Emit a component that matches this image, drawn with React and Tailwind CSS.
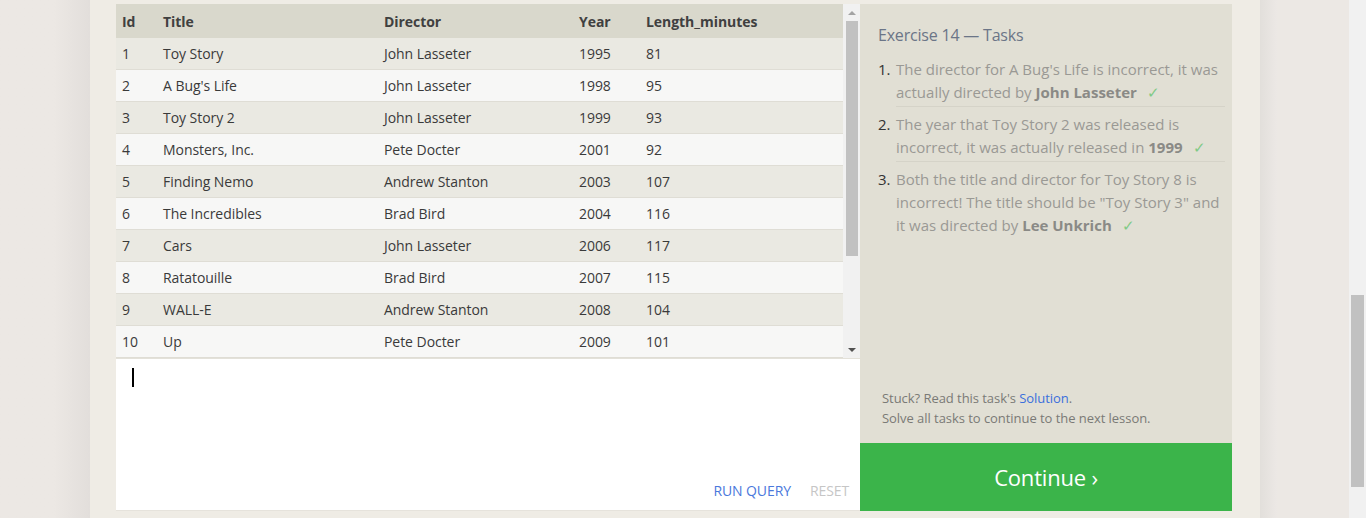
import React from "react";

const rows = [
  [1, "Toy Story", "John Lasseter", 1995, 81],
  [2, "A Bug's Life", "John Lasseter", 1998, 95],
  [3, "Toy Story 2", "John Lasseter", 1999, 93],
  [4, "Monsters, Inc.", "Pete Docter", 2001, 92],
  [5, "Finding Nemo", "Andrew Stanton", 2003, 107],
  [6, "The Incredibles", "Brad Bird", 2004, 116],
  [7, "Cars", "John Lasseter", 2006, 117],
  [8, "Ratatouille", "Brad Bird", 2007, 115],
  [9, "WALL-E", "Andrew Stanton", 2008, 104],
  [10, "Up", "Pete Docter", 2009, 101],
];

const font = { fontFamily: '"Open Sans", "Noto Sans", sans-serif' };

function Check() {
  return <span className="ml-[10px] text-[#7fca86] font-normal">✓</span>;
}

export default function App() {
  return (
    <div
      className="w-[1366px] h-[518px] flex bg-[#ece8e4] overflow-hidden"
      style={font}
    >
      <div className="w-[90px] h-full bg-gradient-to-r from-[#ece8e4] from-60% to-[#e2dedb]" />
      <div className="w-[1170px] h-full bg-[#efece5] pt-[4px] pl-[26px] flex">
        {/* left column */}
        <div className="w-[744px] flex flex-col">
          <div className="h-[354px] flex">
            <div className="w-[727px] text-[14px] tracking-[-0.05px] text-[#3a3a3a]">
              <div className="grid grid-cols-[41px_221px_195px_67px_203px] h-[34px] items-center bg-[#d9d8cc] font-bold text-[#404040]">
                <div className="pl-[6px]">Id</div>
                <div className="pl-[6px]">Title</div>
                <div className="pl-[6px]">Director</div>
                <div className="pl-[6px]">Year</div>
                <div className="pl-[6px]">Length_minutes</div>
              </div>
              {rows.map((r, i) => (
                <div
                  key={r[0]}
                  className={
                    "grid grid-cols-[41px_221px_195px_67px_203px] h-[32px] items-center border-b border-[#dfddd5] " +
                    (i % 2 === 0 ? "bg-[#eae9e2]" : "bg-[#f7f7f6]")
                  }
                >
                  <div className="pl-[6px]">{r[0]}</div>
                  <div className="pl-[6px]">{r[1]}</div>
                  <div className="pl-[6px]">{r[2]}</div>
                  <div className="pl-[6px]">{r[3]}</div>
                  <div className="pl-[6px]">{r[4]}</div>
                </div>
              ))}
            </div>
            <div className="w-[17px] bg-[#f1f1f1] flex flex-col items-center">
              <div className="h-[17px] flex items-center justify-center">
                <div className="w-0 h-0 border-l-[4px] border-r-[4px] border-b-[4px] border-l-transparent border-r-transparent border-b-[#a3a3a3]" />
              </div>
              <div className="w-[12px] h-[235px] bg-[#c1c1c1]" />
              <div className="flex-1" />
              <div className="h-[17px] flex items-center justify-center">
                <div className="w-0 h-0 border-l-[4px] border-r-[4px] border-t-[4px] border-l-transparent border-r-transparent border-t-[#505050]" />
              </div>
            </div>
          </div>
          <div className="h-[153px] bg-white border-t border-[#e3e1d9] border-b border-b-[#e6e3dc] flex flex-col">
            <div className="pl-[16px] pt-[9px]">
              <div className="w-[2px] h-[19px] bg-black" />
            </div>
            <div className="flex-1" />
            <div className="flex justify-end items-center gap-[19px] pr-[11px] pb-[9px] text-[14px] tracking-[-0.1px]">
              <span className="text-[#4a78dc]">RUN QUERY</span>
              <span className="text-[#c6c6c6]">RESET</span>
            </div>
          </div>
        </div>
        {/* right column */}
        <div className="w-[372px] h-[507px] flex flex-col">
          <div className="flex-1 bg-[#e1dfd4] pl-[18px] pr-[7px] pt-[21px] flex flex-col">
            <div className="text-[16px] text-[#6b7587] tracking-[-0.2px] leading-[20px]">
              Exercise 14 — Tasks
            </div>
            <ol className="mt-[13px] text-[15px] leading-[23px] text-[#9a9994] tracking-[0px]">
              <li className="flex">
                <span className="w-[18px] text-[#333] shrink-0">1.</span>
                <div className="border-b border-[#d5d3c8] pb-[2px] flex-1">
                  The director for A Bug's Life is incorrect, it was actually directed by{" "}
                  <b className="text-[#8a8a86]">John Lasseter</b>
                  <Check />
                </div>
              </li>
              <li className="flex mt-[6px]">
                <span className="w-[18px] text-[#333] shrink-0">2.</span>
                <div className="border-b border-[#d5d3c8] pb-[2px] flex-1">
                  The year that Toy Story 2 was released is incorrect, it was actually released in{" "}
                  <b className="text-[#8a8a86]">1999</b>
                  <Check />
                </div>
              </li>
              <li className="flex mt-[6px]">
                <span className="w-[18px] text-[#333] shrink-0">3.</span>
                <div className="flex-1">
                  Both the title and director for Toy Story 8 is incorrect! The title should be "Toy Story 3" and it was directed by{" "}
                  <b className="text-[#8a8a86]">Lee Unkrich</b>
                  <Check />
                </div>
              </li>
            </ol>
            <div className="flex-1" />
            <div className="pl-[4px] pb-[15px] text-[13px] leading-[20px] text-[#7a7a76] tracking-[-0.05px]">
              <div>
                Stuck? Read this task's <span className="text-[#3a6fdc]">Solution</span>.
              </div>
              <div>Solve all tasks to continue to the next lesson.</div>
            </div>
          </div>
          <div className="h-[68px] bg-[#3bb44a] flex items-center justify-center text-white text-[22px] tracking-[-0.2px]">
            Continue ›
          </div>
        </div>
      </div>
      <div className="w-[17px] h-full bg-gradient-to-r from-[#e2dfdb] to-[#ece8e5]" />
      <div className="flex-1 h-full" />
      <div className="w-[17px] h-full bg-[#f1f1f1] pt-[295px] flex flex-col items-center">
        <div className="w-[13px] h-[192px] bg-[#c1c1c1]" />
      </div>
    </div>
  );
}
